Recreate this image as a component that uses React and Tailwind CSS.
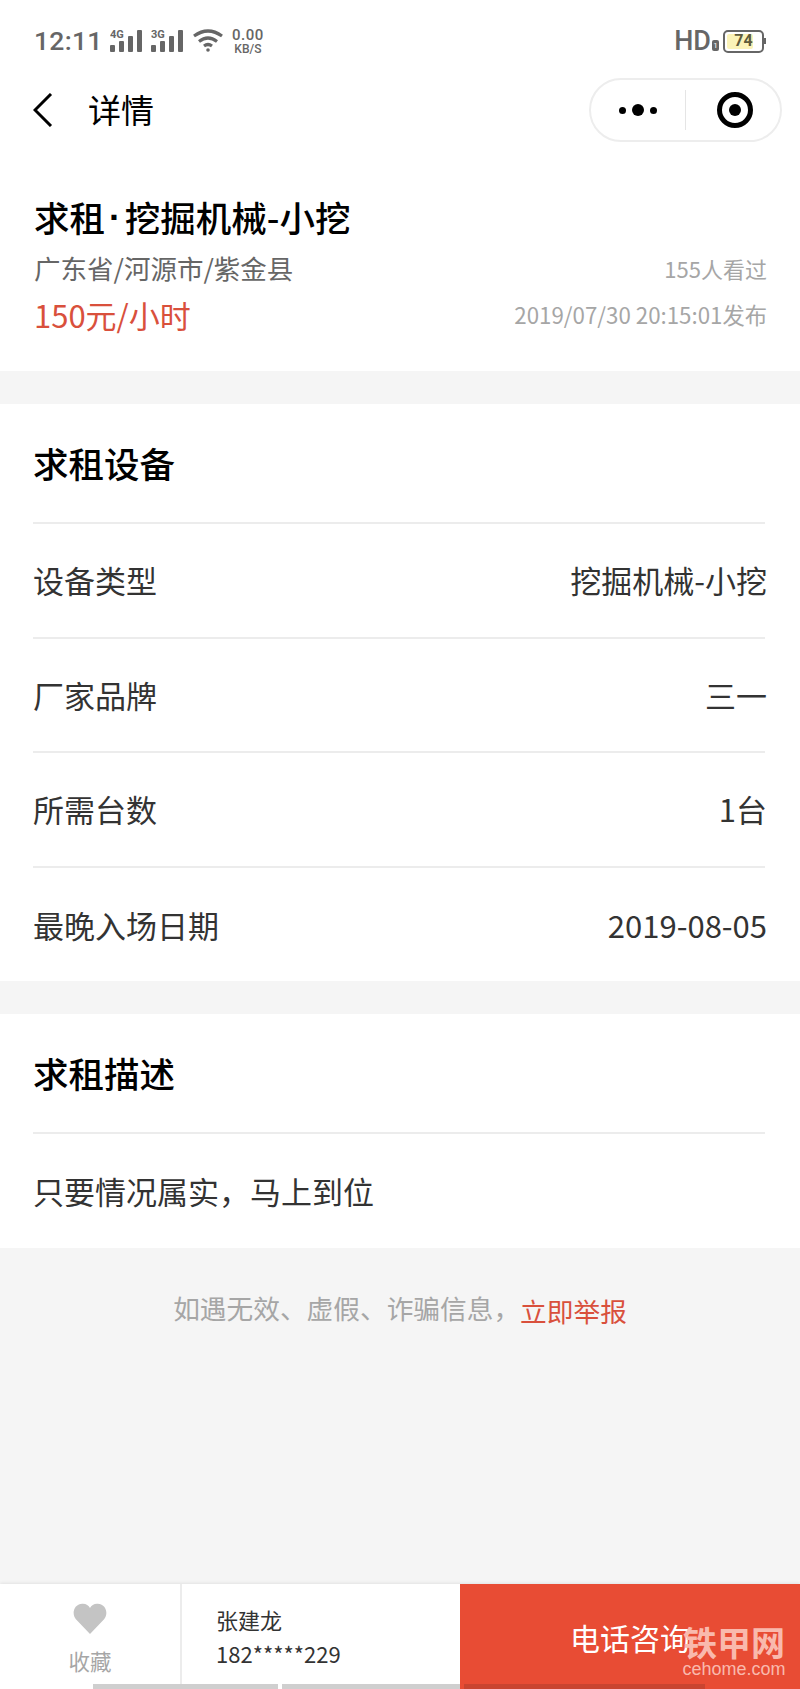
import React from 'react';

const rows = [
  ['设备类型', '挖掘机械-小挖'],
  ['厂家品牌', '三一'],
  ['所需台数', '1台'],
  ['最晚入场日期', '2019-08-05'],
];

function Signal({ label }) {
  return (
    <svg width="32" height="24" viewBox="0 0 32 24" fill="#666">
      <text x="0" y="9" fontSize="11" fontWeight="700" fontFamily="Roboto, sans-serif">{label}</text>
      <rect x="0" y="16" width="5" height="7" rx="1" />
      <rect x="9" y="12" width="5" height="11" rx="1" />
      <rect x="18" y="7" width="5" height="16" rx="1" />
      <rect x="27" y="1" width="5" height="22" rx="1" />
    </svg>
  );
}

function StatusBar() {
  return (
    <div className="h-[70px] pt-[27px] pl-[34px] pr-[36px] flex items-start justify-between text-[#666] font-['Roboto',sans-serif]">
      <div className="flex items-center h-[28px]">
        <span className="text-[26.5px] leading-none font-medium tracking-[0.3px] w-[64px] whitespace-nowrap">12:11</span>
        <div className="flex gap-[9px] ml-[12px]">
          <Signal label="4G" />
          <Signal label="3G" />
        </div>
        <svg className="ml-[9px]" width="32" height="24" viewBox="0 0 32 24" fill="none" stroke="#666" strokeWidth="3.2">
          <path d="M2 7 Q16 -3 30 7" />
          <path d="M7 12.5 Q16 5.5 25 12.5" />
          <path d="M12 17 Q16 14 20 17" />
          <circle cx="16" cy="21" r="1.8" fill="#666" stroke="none" />
        </svg>
        <div className="ml-[8px] flex flex-col items-center font-medium">
          <span className="text-[15px] leading-[15px] tracking-[0.5px]">0.00</span>
          <span className="text-[12px] leading-[12px]">KB/S</span>
        </div>
      </div>
      <div className="flex items-center h-[28px]">
        <span className="text-[27px] leading-none font-medium">HD</span>
        <span className="w-[7px] h-[11px] bg-[#666] rounded-[2px] mt-[8px] ml-[1px] mr-[4px] text-white text-[8px] leading-[11px] text-center">1</span>
        <div className="relative w-[41px] h-[23px] border-2 border-[#666] rounded-[5px] flex items-center justify-center">
          <div className="absolute left-[2px] top-[2px] bottom-[2px] w-[26px] bg-[#fbf3b8] rounded-[2px]" />
          <span className="relative text-[16px] leading-none font-bold text-[#5f5b3c]">74</span>
          <div className="absolute -right-[4px] top-[6px] w-[2px] h-[6px] bg-[#666]" />
        </div>
      </div>
    </div>
  );
}

function NavBar() {
  return (
    <div className="h-[80px] pl-[33px] pr-[18px] flex items-center justify-between">
      <div className="flex items-center">
        <svg width="20" height="34" viewBox="0 0 20 34" fill="none" stroke="#000" strokeWidth="3">
          <path d="M18 1 L2 17 L18 33" />
        </svg>
        <span className="ml-[35px] -mt-[2px] text-[33px] leading-none text-black">详情</span>
      </div>
      <div className="w-[193px] h-[64px] rounded-full border-2 border-[#ededed] bg-white flex items-center">
        <div className="w-[95px] h-[40px] border-r border-[#e5e5e5] flex items-center justify-center gap-[6px]">
          <span className="w-[7px] h-[7px] rounded-full bg-black" />
          <span className="w-[12px] h-[12px] rounded-full bg-black" />
          <span className="w-[7px] h-[7px] rounded-full bg-black" />
        </div>
        <div className="flex-1 pl-[4px] flex items-center justify-center">
          <div className="w-[36px] h-[36px] rounded-full border-[5px] border-black flex items-center justify-center">
            <span className="w-[12px] h-[12px] rounded-full bg-black" />
          </div>
        </div>
      </div>
    </div>
  );
}

export default function App() {
  return (
    <div className="relative w-[800px] h-[1689px] overflow-hidden flex flex-col bg-[#f5f5f5] font-['Noto_Sans_CJK_SC','Noto_Sans',sans-serif]">
      <div className="bg-white h-[371px]">
        <StatusBar />
        <NavBar />
        <div className="pl-[34px] pr-[33px] pt-[45px]">
          <h1 className="text-[35.5px] leading-[44px] font-medium text-black flex items-center">
            <span>求租</span>
            <span className="mx-[4px] font-['Liberation_Sans',sans-serif] font-bold">·</span>
            <span>挖掘机械-小挖</span>
          </h1>
          <div className="mt-[9px] h-[40px] flex items-center justify-between">
            <span className="text-[26.5px] text-[#666]">广东省/河源市/紫金县</span>
            <span className="text-[22px] text-[#a6a6a6]">155人看过</span>
          </div>
          <div className="mt-[7px] h-[40px] flex items-center justify-between">
            <span className="text-[31px] text-[#d9503c]">150元/小时</span>
            <span className="text-[22.3px] text-[#a6a6a6]">2019/07/30 20:15:01发布</span>
          </div>
        </div>
      </div>

      <div className="mt-[33px] bg-white h-[577px] pl-[33px] pr-[35px]">
        <div className="h-[120px] flex items-center border-b-2 border-[#ececec] text-[35.5px] font-medium text-black">求租设备</div>
        {rows.map(([label, value], i) => (
          <div key={label} className={`h-[114.5px] flex items-center justify-between text-[31px] text-[#333] ${i < rows.length - 1 ? 'border-b-2 border-[#ececec]' : ''}`}>
            <span>{label}</span>
            <span className="-mr-[2px]">{value}</span>
          </div>
        ))}
      </div>

      <div className="mt-[33px] bg-white h-[234px] pl-[33px] pr-[35px]">
        <div className="h-[120px] flex items-center border-b-2 border-[#ececec] text-[35.5px] font-medium text-black">求租描述</div>
        <div className="h-[114px] flex items-center text-[31px] text-[#333]">只要情况属实，马上到位</div>
      </div>

      <div className="flex-1 pt-[42px] flex justify-center items-start text-[26.7px] leading-[36px]">
        <span className="text-[#a6a6a6]">如遇无效、虚假、诈骗信息，</span>
        <span className="text-[#d9503c] mt-[3px]">立即举报</span>
      </div>

      <div className="h-[105px] flex bg-white shadow-[0_-1px_3px_rgba(0,0,0,0.08)]">
        <div className="w-[182px] border-r-2 border-[#ececec] flex flex-col items-center pt-[19px]">
          <svg width="34" height="31" viewBox="0 0 24 22" fill="#c4c4c4">
            <path d="M12 22 L2 11.5 C-1 8 0 1 6.5 0.5 C9 0.3 11 1.5 12 3.5 C13 1.5 15 0.3 17.5 0.5 C24 1 25 8 22 11.5 Z" />
          </svg>
          <span className="mt-[13px] text-[21.5px] leading-[28px] text-[#a6a6a6]">收藏</span>
        </div>
        <div className="w-[278px] pl-[34px] pt-[18px] text-[22px] leading-[34px] text-[#333]">
          <div>张建龙</div>
          <div>182*****229</div>
        </div>
        <div className="flex-1 bg-[#e84c34] pl-[110px] pt-[31px] text-[30px] leading-[44px] text-white">电话咨询</div>
      </div>

      {/* home indicator left on the capture */}
      <div className="absolute left-[93px] bottom-0 w-[612px] h-[5px] flex gap-[4px]">
        <div className="w-[185px] bg-[#cfcfcf]" />
        <div className="w-[178px] bg-[#cfcfcf]" />
        <div className="flex-1 bg-[#c94430]" />
      </div>

      {/* cehome watermark */}
      <div className="absolute right-[13px] bottom-[10px] w-[106px] flex flex-col items-center text-[#f9b9ad]">
        <span className="text-[34px] leading-[35px] font-bold whitespace-nowrap">铁甲网</span>
        <span className="text-[18px] leading-[20px] font-['Liberation_Sans',sans-serif]">cehome.com</span>
      </div>
    </div>
  );
}
